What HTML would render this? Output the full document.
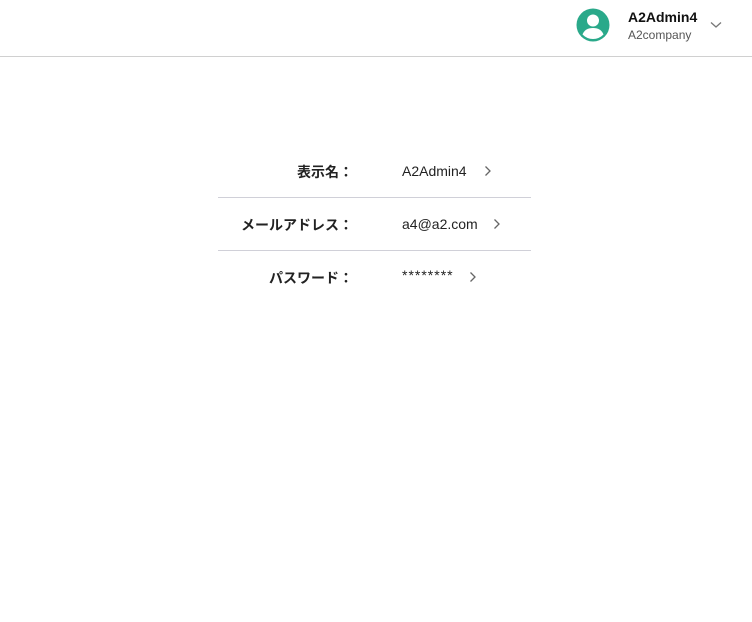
<!DOCTYPE html>
<html><head><meta charset="utf-8"><style>
body{margin:0;width:752px;height:622px;background:#fff;font-family:"Liberation Sans","Noto Sans CJK JP",sans-serif;color:#222;position:relative;overflow:hidden}
.hdr{position:absolute;left:0;top:0;width:752px;height:56px;border-bottom:1px solid #d0d0d0}
.t{position:absolute;white-space:nowrap}
.line{position:absolute;left:218px;width:313px;height:1px;background:#d0d0d8}
.lab{position:absolute;right:399px;font-size:14px;font-weight:bold;white-space:nowrap}
.val{position:absolute;left:402px;font-size:14px;white-space:nowrap}
</style></head><body>
<div class="hdr"></div>
<svg style="position:absolute;left:576px;top:8px" width="34" height="34" viewBox="0 0 34 34">
<circle cx="17" cy="17" r="16.5" fill="#2aa98a"/>
<circle cx="17" cy="12.5" r="6" fill="#fff"/>
<path d="M6.5 26.5 Q9 20 17 20 Q25 20 27.5 26.5 Q23 31 17 31 Q11 31 6.5 26.5Z" fill="#fff"/>
</svg>
<div class="t" style="left:628px;top:9px;font-size:14px;font-weight:bold;color:#111">A2Admin4</div>
<div class="t" style="left:628px;top:28px;font-size:12px;color:#555">A2company</div>
<svg style="position:absolute;left:710px;top:21px" width="12" height="8" viewBox="0 0 12 8"><path d="M1 1.5 L6 6 L11 1.5" fill="none" stroke="#777" stroke-width="1.3"/></svg>

<div class="lab" style="top:162px">表示名：</div>
<div class="val" style="top:163px">A2Admin4</div>
<svg style="position:absolute;left:484px;top:165px" width="8" height="12" viewBox="0 0 8 12"><path d="M1.5 1.5 L6 6 L1.5 10.5" fill="none" stroke="#666" stroke-width="1.3"/></svg>
<div class="line" style="top:197px"></div>
<div class="lab" style="top:215px">メールアドレス：</div>
<div class="val" style="top:216px">a4@a2.com</div>
<svg style="position:absolute;left:493px;top:218px" width="8" height="12" viewBox="0 0 8 12"><path d="M1.5 1.5 L6 6 L1.5 10.5" fill="none" stroke="#666" stroke-width="1.3"/></svg>
<div class="line" style="top:250px"></div>
<div class="lab" style="top:268px">パスワード：</div>
<div class="val" style="top:267px;font-size:14px;letter-spacing:1px">********</div>
<svg style="position:absolute;left:469px;top:271px" width="8" height="12" viewBox="0 0 8 12"><path d="M1.5 1.5 L6 6 L1.5 10.5" fill="none" stroke="#666" stroke-width="1.3"/></svg>
</body></html>
